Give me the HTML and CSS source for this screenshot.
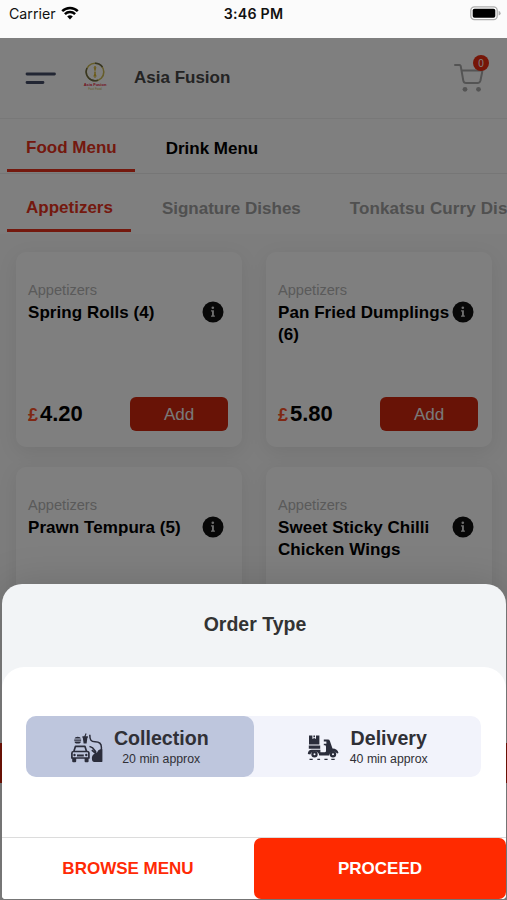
FILE: index.html
```html
<!DOCTYPE html>
<html lang="en">
<head>
  <meta charset="UTF-8">
  <meta name="viewport" content="width=device-width, initial-scale=1.0">
  <title>Asia Fusion</title>
  <link rel="stylesheet" href="styles.css">
</head>
<body>
  <div class="status-bar">
      <div class="carrier">
          <span>Carrier</span>
          <svg width="18" height="14" viewBox="0 0 18 14">
              <path d="M1.2 5.2a11.2 11.2 0 0 1 15.6 0M3.9 8.1a7.3 7.3 0 0 1 10.2 0" fill="none" stroke="#000" stroke-width="2.5"/>
              <path d="M9 13.5L6.2 10.6a4 4 0 0 1 5.6 0z" fill="#000"/>
          </svg>
      </div>
      <div class="time">3:46 PM</div>
      <svg class="battery" width="31" height="15" viewBox="0 0 31 15">
          <rect x=".8" y=".8" width="26.4" height="12.8" rx="3.6" fill="#fff" stroke="#adadad" stroke-width="1.3"/>
          <rect x="2.7" y="2.7" width="22.6" height="9" rx="1.8" fill="#000"/>
          <path d="M28.6 4.8q2 .7 2 2.4t-2 2.4z" fill="#adadad"/>
      </svg>
  </div>

  <div class="app">
      <div class="header">
          <svg class="menu-icon" width="32" height="14" viewBox="0 0 32 14">
              <path d="M2 3h27.5M2 11.5h16" fill="none" stroke="#454c66" stroke-width="2.8" stroke-linecap="round"/>
          </svg>
          <div class="logo">
              <svg width="22" height="20" viewBox="0 0 22 20">
                  <circle cx="11" cy="10" r="8.8" fill="none" stroke="#cdbb55" stroke-width="1.6"/>
                  <path d="M3 6A9 9 0 0 0 14 18.3M11 1.2A9 9 0 0 1 18.5 5" fill="none" stroke="#6c6a46" stroke-width="1.5"/>
                  <path d="M11 4v12" stroke="#d8b630" stroke-width="1.4" stroke-dasharray="2 .8"/>
                  <path d="M9.3 5.5h3.4L11 8zM9.3 14.5h3.4L11 10z" fill="#d8b630"/>
              </svg>
              <span class="logo-name">Asia Fusion</span>
              <span class="logo-sub">Fast Food</span>
          </div>
          <h1>Asia Fusion</h1>
          <div class="cart">
              <svg width="32" height="30" viewBox="0 0 32 30">
                  <path d="M2 2H6.5q1 0 1.2 1l2.6 14.6q.5 2.4 2.8 2.4h11.4q2.2 0 2.9-2.3L29.2 9q.4-1.4-1-1.4H8.5" fill="none" stroke="#a8a8a8" stroke-width="2" stroke-linecap="round" stroke-linejoin="round"/>
                  <circle cx="12" cy="26.3" r="2.4" fill="#a8a8a8"/>
                  <circle cx="25.5" cy="26.3" r="2.4" fill="#a8a8a8"/>
              </svg>
              <span class="badge">0</span>
          </div>
      </div>

      <div class="tabs main-tabs">
          <div class="tab active">Food Menu</div>
          <div class="tab">Drink Menu</div>
      </div>
      <div class="tabs sub-tabs">
          <div class="tab active">Appetizers</div>
          <div class="tab">Signature Dishes</div>
          <div class="tab">Tonkatsu Curry Dishes</div>
      </div>

      <div class="cards">
          <div class="card">
              <div class="category">Appetizers</div>
              <div class="title-row">
                  <h2>Spring Rolls (4)</h2>
                  <svg class="info" width="22" height="22" viewBox="0 0 22 22"><circle cx="11" cy="11" r="10.5"/><circle class="mark" cx="10.8" cy="6.8" r="1.3"/><path class="mark" d="M9 9.2h2.9v5.3h1v1.3H9v-1.3h1v-4H9z"/></svg>
              </div>
              <div class="buy-row">
                  <div class="price"><span>£</span>4.20</div>
                  <button class="add">Add</button>
              </div>
          </div>
          <div class="card">
              <div class="category">Appetizers</div>
              <div class="title-row">
                  <h2>Pan Fried Dumplings (6)</h2>
                  <svg class="info" width="22" height="22" viewBox="0 0 22 22"><circle cx="11" cy="11" r="10.5"/><circle class="mark" cx="10.8" cy="6.8" r="1.3"/><path class="mark" d="M9 9.2h2.9v5.3h1v1.3H9v-1.3h1v-4H9z"/></svg>
              </div>
              <div class="buy-row">
                  <div class="price"><span>£</span>5.80</div>
                  <button class="add">Add</button>
              </div>
          </div>
          <div class="card">
              <div class="category">Appetizers</div>
              <div class="title-row">
                  <h2>Prawn Tempura (5)</h2>
                  <svg class="info" width="22" height="22" viewBox="0 0 22 22"><circle cx="11" cy="11" r="10.5"/><circle class="mark" cx="10.8" cy="6.8" r="1.3"/><path class="mark" d="M9 9.2h2.9v5.3h1v1.3H9v-1.3h1v-4H9z"/></svg>
              </div>
          </div>
          <div class="card">
              <div class="category">Appetizers</div>
              <div class="title-row">
                  <h2>Sweet Sticky Chilli Chicken Wings</h2>
                  <svg class="info" width="22" height="22" viewBox="0 0 22 22"><circle cx="11" cy="11" r="10.5"/><circle class="mark" cx="10.8" cy="6.8" r="1.3"/><path class="mark" d="M9 9.2h2.9v5.3h1v1.3H9v-1.3h1v-4H9z"/></svg>
              </div>
          </div>
      </div>
      <div class="basket-bar"></div>
  </div>

  <div class="overlay">
      <div class="sheet">
          <div class="sheet-title">Order Type</div>
          <div class="sheet-body">
              <div class="order-types">
                  <div class="order-type selected">
                      <svg width="32" height="30" viewBox="0 0 32 30">
                          <g fill="#2b2d3b">
                              <path d="M3.5 5.6q.4-1.8 3.2-1.8t3.2 1.8zM3.2 6.4h6.9v1.4H3.2zM3.5 8.6h6.4q0 1.8-1.6 1.8H5q-1.5 0-1.5-1.8z"/>
                              <path d="M11.4 3.2h1.9L14.6.3l1 .4-1 2.5h2.3v1.5h-.5l-.8 5.8h-3l-.8-5.8h-.4z"/>
                              <path d="M20.9 26q-.4-4 2.9-5.2l-3.5-3 1-1.2 4.6 3.2q1.2-3.3 3.4-3.6h2V29h-8q-2.2 0-2.4-3z"/>
                          </g>
                          <g fill="none" stroke="#2b2d3b" stroke-width="1.7" stroke-linejoin="round">
                              <path d="M2.9 18.3l1.6-5h9.4l1.6 5M2.3 18.5h14q1.6 0 1.6 1.7V25H.9v-4.8q0-1.7 1.4-1.7z"/>
                              <path d="M6 22.6h6.8" stroke-width="2"/>
                              <path d="M18.8 1.8c0 5 1 6.9 5.3 6.9 4.3 0 6.3 2.2 6.3 5.5V28" stroke-width="1.5"/>
                              <path d="M18.5 13.3l3.2 1.6 3.3 4" stroke-width="1.5"/>
                          </g>
                          <path d="M1.2 25h4v3.3q0 1-1 1h-2q-1 0-1-1zM13.6 25h4v3.3q0 1-1 1h-2q-1 0-1-1z" fill="#2b2d3b"/>
                          <circle cx="3.5" cy="22" r="1.2" fill="#2b2d3b"/>
                          <circle cx="15.3" cy="22" r="1.2" fill="#2b2d3b"/>
                      </svg>
                      <div class="type-text">
                          <b>Collection</b>
                          <small>20 min approx</small>
                      </div>
                  </div>
                  <div class="order-type">
                      <svg width="32" height="26" viewBox="0 0 32 26">
                          <g fill="#2b2d3b">
                              <path d="M2 .5h3.4v3.6l1.8-1 1.8 1V.5h3.4v9H2z"/>
                              <path d="M6.4.5H8v1.7H6.4z"/>
                              <path d="M1.8 10.5h11.4v3.2H1.8z"/>
                              <path d="M.8 19q.2-4.3 4-4.3h8.6v2.6h4.2q1.4 0 1.4-1.4v-4.2q0-1.4-1.2-1.4h-1V8.8h2.6V6.5h-2.6V4.6h4.1q1.5 0 2 1.4l2.6 7.6q5 .1 6 4.4l-1.4.5q-1.6-2.4-4.2-2-3.2.5-3.6 3.9h-10q-.6-3.9-4.6-3.9-3.4 0-4.4 3z"/>
                          </g>
                          <g fill="#f1f3fc" stroke="#2b2d3b" stroke-width="2.2">
                              <circle cx="7.5" cy="19.2" r="2.1"/>
                              <circle cx="26" cy="19.2" r="2.1"/>
                          </g>
                          <path d="M2.5 24.3h3.2M10.3 24.3h2.8M17.4 24.3h3.2M24.3 24.3h3.4" stroke="#2b2d3b" stroke-width="1.2"/>
                      </svg>
                      <div class="type-text">
                          <b>Delivery</b>
                          <small>40 min approx</small>
                      </div>
                  </div>
              </div>
              <div class="sheet-buttons">
                  <button class="browse">BROWSE MENU</button>
                  <button class="proceed">PROCEED</button>
              </div>
          </div>
      </div>
  </div>
</body>
</html>
```
FILE: styles.css
```css
* {
    box-sizing: border-box;
}

body {
    font-family: "Liberation Sans", Arial, sans-serif;
    margin: 0;
    height: 900px;
    display: flex;
    flex-direction: column;
    position: relative;
    overflow: hidden;
    background: #fff;
}

h1, h2 {
    margin: 0;
    font-size: 17px;
}

button {
    border: none;
    padding: 0;
    font-family: inherit;
    font-size: 17px;
}

svg {
    display: block;
    flex: none;
}

/* status bar */
.status-bar {
    height: 38px;
    flex: none;
    background: #fbfbfb;
    display: grid;
    grid-template-columns: 1fr auto 1fr;
    align-items: start;
    padding: 6px 6px 0 9px;
    font-family: Inter, sans-serif;
    font-size: 14.2px;
    line-height: 16px;
    color: #111;
}

.carrier {
    display: flex;
    gap: 5px;
}

.time {
    font-weight: 600;
    letter-spacing: 0.25px;
    margin-right: 3px;
}

.battery {
    justify-self: end;
}

/* menu page */
.app {
    flex: 1;
    min-height: 0;
    overflow: hidden;
    display: flex;
    flex-direction: column;
    background: #fafafa;
}

.header {
    height: 81px;
    flex: none;
    display: flex;
    align-items: center;
    padding: 0 22px 1px 25px;
    background: #fff;
    border-bottom: 1px solid #f0f0f0;
}

.logo {
    width: 26px;
    margin: -3px 0 0 25px;
    display: flex;
    flex-direction: column;
    align-items: center;
    white-space: nowrap;
}

.logo-name {
    font-size: 4px;
    line-height: 5px;
    font-weight: bold;
    color: #e8203a;
}

.logo-sub {
    font-size: 3px;
    line-height: 4px;
    color: #cdbb55;
}

h1 {
    margin-left: 26px;
    color: #484848;
}

.cart {
    margin-left: auto;
    position: relative;
}

.badge {
    position: absolute;
    top: -8px;
    right: -4px;
    width: 16px;
    height: 16px;
    border-radius: 50%;
    background: #ec2c10;
    color: #fff;
    font-size: 10px;
    line-height: 17px;
    text-align: center;
}

.tabs {
    flex: none;
    display: flex;
    padding-left: 7px;
    gap: 12px;
    background: #fff;
    font-size: 17px;
    font-weight: bold;
    white-space: nowrap;
    overflow: hidden;
}

.tab {
    padding: 0 18px 0 19px;
    line-height: 22px;
}

.main-tabs {
    height: 55px;
    border-bottom: 1px solid #ececec;
}

.main-tabs .tab {
    height: 53px;
    padding-top: 19px;
}

.sub-tabs {
    height: 60px;
}

.sub-tabs .tab {
    height: 58px;
    padding-top: 24px;
    color: #a0a0a0;
}

.sub-tabs .tab:last-child {
    letter-spacing: 0.12px;
}

.main-tabs .active,
.sub-tabs .active {
    color: #e8321c;
    border-bottom: 3px solid #e8321c;
    padding-top: 18px;
}

.sub-tabs .active {
    padding-top: 23px;
}

.cards {
    display: grid;
    grid-template-columns: 226px 226px;
    grid-auto-rows: 195px;
    gap: 20px 24px;
    padding: 18px 15px 0 16px;
}

.card {
    display: flex;
    flex-direction: column;
    padding: 29px 14px 16px 12px;
    background: #fff;
    border-radius: 10px;
    box-shadow: 0 5px 20px rgba(0, 0, 0, 0.08);
}

.category {
    font-size: 14.6px;
    line-height: 18px;
    color: #b4b4b4;
}

.title-row {
    display: flex;
    justify-content: space-between;
    align-items: flex-start;
    margin: 2px 4px 0 0;
}

.title-row h2 {
    width: 174px;
    line-height: 22px;
    margin: 1px -2px 0 0;
    letter-spacing: 0.06px;
}

.info {
    fill: #111;
}

.info .mark {
    fill: #ddd;
}

.buy-row {
    display: flex;
    justify-content: space-between;
    align-items: center;
    margin-top: auto;
}

.price {
    font-size: 22px;
    font-weight: bold;
}

.price span {
    font-size: 18px;
    margin-right: 2px;
    color: #ff5028;
}

.add {
    width: 98px;
    height: 34px;
    padding-top: 1px;
    border-radius: 6px;
    background: #d0260c;
    color: #f4f4f4;
}

.basket-bar {
    height: 40px;
    flex: none;
    margin-top: 81px;
    background: #e0260c;
}

/* order type sheet */
.overlay {
    position: absolute;
    top: 38px;
    left: 0;
    right: 0;
    bottom: 0;
    display: flex;
    align-items: flex-end;
    padding: 0 1px 1px 2px;
    background: rgba(0, 0, 0, 0.5);
}

.sheet {
    flex: 1;
    height: 315px;
    display: flex;
    flex-direction: column;
    background: #f2f4f6;
    border-radius: 20px 20px 4px 4px;
    overflow: hidden;
    box-shadow: 0 0 40px rgba(0, 0, 0, 0.15);
}

.sheet-title {
    height: 83px;
    line-height: 81px;
    padding-left: 2px;
    text-align: center;
    font-size: 19.5px;
    font-weight: bold;
    color: #333;
}

.sheet-body {
    flex: 1;
    display: flex;
    flex-direction: column;
    justify-content: space-between;
    background: #fff;
    border-radius: 22px 22px 0 0;
    padding-top: 49px;
}

.order-types {
    display: flex;
    margin: 0 25px 0 24px;
    height: 61px;
    border-radius: 10px;
    background: #f2f3fb;
}

.order-type {
    flex: 1;
    display: flex;
    align-items: center;
    justify-content: center;
    gap: 11px;
    padding-top: 2px;
    border-radius: 10px;
}

.selected {
    background: #bec6dd;
}

.type-text {
    display: flex;
    flex-direction: column;
    align-items: center;
    color: #303036;
}

.type-text b {
    font-size: 19.6px;
    line-height: 23px;
}

.type-text small {
    font-size: 12.3px;
    line-height: 18px;
}

.sheet-buttons {
    display: flex;
    height: 62px;
    border-top: 1px solid #dcdcdc;
}

.sheet-buttons button {
    flex: 1;
    font-weight: bold;
}

.browse {
    background: #fff;
    color: #ff2a05;
}

.proceed {
    background: #ff2a00;
    color: #fff;
    border-radius: 7px;
}
```
